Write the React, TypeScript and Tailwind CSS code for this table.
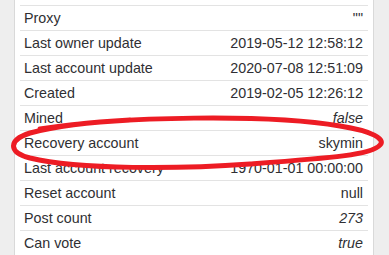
const rows: { label: string; value: string; italic?: boolean }[] = [
  { label: 'Proxy', value: '""' },
  { label: 'Last owner update', value: '2019-05-12 12:58:12' },
  { label: 'Last account update', value: '2020-07-08 12:51:09' },
  { label: 'Created', value: '2019-02-05 12:26:12' },
  { label: 'Mined', value: 'false', italic: true },
  { label: 'Recovery account', value: 'skymin' },
  { label: 'Last account recovery', value: '1970-01-01 00:00:00' },
  { label: 'Reset account', value: 'null' },
  { label: 'Post count', value: '273', italic: true },
  { label: 'Can vote', value: 'true', italic: true },
];

export default function App() {
  return (
    <div
      className="relative w-[389px] h-[255px] overflow-hidden bg-[#eeeeee] flex text-[14.3px] text-[#2f2f33]"
      style={{ fontFamily: '"Liberation Sans", Arial, sans-serif' }}
    >
      {/* gutter */}
      <div className="w-[14px] shrink-0" />

      {/* panel */}
      <div className="w-[360px] shrink-0 bg-white border-x border-[#d9d9d9] px-[5px]">
        {/* row scrolled mostly out of view */}
        <div className="h-[16px] mt-[-11px] overflow-hidden flex justify-end pr-[6px] pt-[2px] leading-[20px]">
          ""
        </div>
        {rows.map((r) => (
          <div
            key={r.label}
            className="flex justify-between border-t border-[#e3e3e3] pt-[2px] pb-[2px] pl-[4px] pr-[5px] leading-[20px] whitespace-nowrap"
          >
            <span>{r.label}</span>
            <span className={r.italic ? 'italic' : ''}>{r.value}</span>
          </div>
        ))}
      </div>

      {/* right gutter */}
      <div className="flex-1" />

      {/* hand-drawn annotation */}
      <svg className="absolute left-0 top-0 pointer-events-none" width="389" height="255">
        <path
          d="M 40 129 C 120 116, 270 114, 340 126 C 372 131, 386 139, 380 145 C 372 155, 330 158, 250 164 C 180 169, 80 170, 30 158 C 8 152, 8 140, 30 133 C 60 125, 90 122, 130 120"
          fill="none"
          stroke="#ed1c24"
          strokeWidth="5"
          strokeLinecap="round"
        />
      </svg>
    </div>
  );
}
